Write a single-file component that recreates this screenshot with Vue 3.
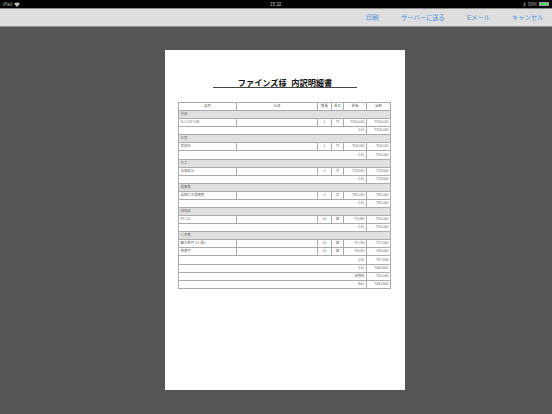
<script setup>
const rows = [
  { t: 'sec', a: '塗装' },
  { t: 'item', a: 'G-1 107 D/B', q: '1', u: '式', p: '¥150,000', s: '¥150,000' },
  { t: 'sub', l: '小計', s: '¥150,000' },
  { t: 'sec', a: '左官' },
  { t: 'item', a: '美装材', q: '1', u: '式', p: '¥54,000', s: '¥54,000' },
  { t: 'sub', l: '小計', s: '¥54,000' },
  { t: 'sec', a: '木工' },
  { t: 'item', a: '出来高分', q: '1', u: '式', p: '¥13,800', s: '¥13,800' },
  { t: 'sub', l: '小計', s: '¥13,800' },
  { t: 'sec', a: '運搬費' },
  { t: 'item', a: '設備力木運搬費', q: '1', u: '台', p: '¥32,000', s: '¥32,000' },
  { t: 'sub', l: '小計', s: '¥32,000' },
  { t: 'sec', a: '消耗品' },
  { t: 'item', a: 'RC-10', q: '50', u: '個', p: '¥1,080', s: '¥54,000' },
  { t: 'sub', l: '小計', s: '¥54,000' },
  { t: 'sec', a: '人件費' },
  { t: 'item', a: '職方単月 3人週5', q: '10', u: '個', p: '¥5,700', s: '¥57,000' },
  { t: 'item', a: '単単月', q: '10', u: '個', p: '¥4,000', s: '¥40,000' },
  { t: 'sub', l: '小計', s: '¥97,000' },
  { t: 'tot', l: '小計', s: '¥400,800' },
  { t: 'tot', l: '消費税', s: '¥32,064' },
  { t: 'tot', l: '合計', s: '¥432,864' },
]
const actions = ['印刷', 'サーバーに送る', 'Eメール', 'キャンセル']
</script>

<template>
  <div class="screen">
    <header class="status">
      <div class="status-left">
        <span>iPad</span>
        <svg class="wifi" viewBox="0 0 10 8" width="6" height="5">
          <path d="M5 8 0 2.6C2.8 0 7.2 0 10 2.6Z" fill="#bbb" />
        </svg>
      </div>
      <span class="clock">15:32</span>
      <div class="status-right">
        <svg class="bt" viewBox="0 0 4 8" width="3" height="5">
          <path d="M0.5 2 3.2 5.5 2 7V1L3.2 2.5 0.5 6" fill="none" stroke="#bbb" stroke-width="0.7" />
        </svg>
        <span>99%</span>
        <span class="battery"><i></i></span>
      </div>
    </header>
    <nav class="toolbar">
      <a v-for="x in actions" :key="x" class="action">{{ x }}</a>
    </nav>
    <main class="stage">
      <section class="sheet">
        <h1 class="title">ファインズ様&nbsp;&nbsp;内訳明細書</h1>
        <table class="tbl">
          <colgroup>
            <col class="c1" /><col class="c2" /><col class="c3" /><col class="c4" /><col class="c5" /><col class="c6" />
          </colgroup>
          <thead>
            <tr>
              <th>項目</th><th>仕様</th><th>数量</th><th>単位</th><th>単価</th><th>金額</th>
            </tr>
          </thead>
          <tbody>
            <tr v-for="(r, i) in rows" :key="i" :class="r.t">
              <td v-if="r.t === 'sec'" colspan="6" class="left">{{ r.a }}</td>
              <template v-else-if="r.t === 'item'">
                <td class="left">{{ r.a }}</td>
                <td></td>
                <td class="mid">{{ r.q }}</td>
                <td class="mid">{{ r.u }}</td>
                <td class="right">{{ r.p }}</td>
                <td class="right">{{ r.s }}</td>
              </template>
              <template v-else>
                <td colspan="5" class="right">{{ r.l }}</td>
                <td class="right">{{ r.s }}</td>
              </template>
            </tr>
          </tbody>
        </table>
      </section>
    </main>
  </div>
</template>

<style scoped>
.screen {
  width: 552px;
  height: 414px;
  display: flex;
  flex-direction: column;
  overflow: hidden;
  background: #555;
  font-family: "Liberation Sans", "Noto Sans CJK JP", sans-serif;
}
.status {
  height: 8px;
  flex: none;
  background: #000;
  color: #a8a8a8;
  font-size: 4.5px;
  display: flex;
  align-items: center;
  justify-content: space-between;
  padding: 0 3px;
  position: relative;
}
.status-left,
.status-right {
  display: flex;
  align-items: center;
  gap: 2px;
}
.clock {
  position: absolute;
  left: 270px;
  color: #ccc;
}
.wifi,
.bt {
  display: block;
}
.battery {
  width: 10px;
  height: 4px;
  border: 0.5px solid #999;
  box-sizing: border-box;
  display: block;
}
.battery i {
  display: block;
  height: 100%;
  background: #4cd964;
}
.toolbar {
  height: 19px;
  box-sizing: border-box;
  flex: none;
  background: #dedede;
  border-top: 1px solid #888;
  border-bottom: 1px solid #8e8e8e;
  display: flex;
  align-items: center;
  justify-content: flex-end;
  gap: 22px;
  padding: 0 8.5px 1px 0;
}
.action {
  color: #4a90e2;
  font-size: 6.3px;
}
.stage {
  flex: 1;
  padding: 23px 0 0 165px;
  display: flex;
}
.sheet {
  width: 240px;
  height: 340px;
  background: #fff;
  box-sizing: border-box;
  padding: 29px 14.5px 0 13.5px;
  display: flex;
  flex-direction: column;
  align-items: center;
}
.title {
  margin: 0 0 14px 1px;
  width: 144px;
  height: 8px;
  border-bottom: 1px solid #444;
  text-align: center;
  font-size: 8.2px;
  line-height: 10px;
  font-weight: 700;
  color: #111;
  white-space: nowrap;
}
.tbl {
  width: 212px;
  table-layout: fixed;
  border-collapse: collapse;
  font-size: 3.4px;
  color: #6a6a6a;
  border: 1px solid #aaa;
}
.c1 { width: 58px; }
.c2 { width: 81px; }
.c3 { width: 14px; }
.c4 { width: 12px; }
.c5 { width: 23px; }
.c6 { width: 24px; }
th,
td {
  height: 8.09px;
  padding: 0.4px 1.5px 0;
  box-sizing: border-box;
  border: 1px solid #aaa;
  font-weight: 400;
  line-height: 1;
  white-space: nowrap;
  overflow: hidden;
  text-align: center;
}
.left { text-align: left; }
.mid { text-align: center; }
.right { text-align: right; }
.sec td { background: #e0e0e0; }
</style>
